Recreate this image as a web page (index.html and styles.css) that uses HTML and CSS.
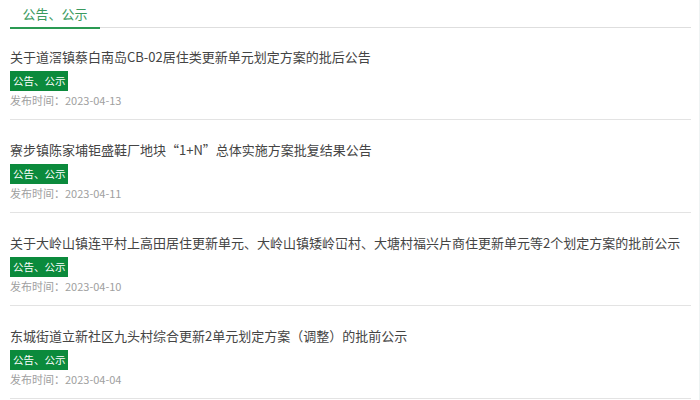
FILE: index.html
```html
<!DOCTYPE html>
<html lang="zh-CN">
<head>
<meta charset="utf-8">
<title>公告、公示</title>
<link rel="stylesheet" href="styles.css">
</head>
<body>
<div class="page">
  <div class="tabs">
    <div class="tab active">公告、公示</div>
  </div>
  <ul class="list">
    <li class="item">
      <div class="title">关于道滘镇蔡白南岛CB-02居住类更新单元划定方案的批后公告</div>
      <span class="tag">公告、公示</span>
      <div class="date">发布时间：2023-04-13</div>
    </li>
    <li class="item">
      <div class="title">寮步镇陈家埔钜盛鞋厂地块“1+N”总体实施方案批复结果公告</div>
      <span class="tag">公告、公示</span>
      <div class="date">发布时间：2023-04-11</div>
    </li>
    <li class="item">
      <div class="title">关于大岭山镇连平村上高田居住更新单元、大岭山镇矮岭冚村、大塘村福兴片商住更新单元等2个划定方案的批前公示</div>
      <span class="tag">公告、公示</span>
      <div class="date">发布时间：2023-04-10</div>
    </li>
    <li class="item">
      <div class="title">东城街道立新社区九头村综合更新2单元划定方案（调整）的批前公示</div>
      <span class="tag">公告、公示</span>
      <div class="date">发布时间：2023-04-04</div>
    </li>
  </ul>
</div>
</body>
</html>
```

FILE: styles.css
```css
* { box-sizing: border-box; }
html, body {
  margin: 0;
  padding: 0;
  background: #fff;
}
body {
  font-family: "Noto Sans CJK SC", "Noto Sans", sans-serif;
  overflow: hidden;
}
.page {
  width: 700px;
  height: 400px;
  padding: 0 8px 0 10px;
  border-right: 1px solid #eef3f3;
}
.tabs {
  display: flex;
  border-bottom: 1px solid #dedede;
  height: 28px;
}
.tab {
  height: 29px;
  margin-bottom: -2px;
  padding: 0 12px 0 12px;
  width: 90px;
  font-size: 13px;
  line-height: 27px;
  color: #3a9a5e;
  border-bottom: 2px solid #2a9a52;
  text-align: center;
}
.list {
  list-style: none;
  margin: 0;
  padding: 0;
}
.item {
  padding: 20px 0 10px;
  border-bottom: 1px solid #e3e3e3;
}
.item:first-child {
  padding-top: 19px;
}
.title {
  font-size: 13px;
  line-height: 20px;
  color: #444;
  white-space: nowrap;
}
.tag {
  display: inline-block;
  margin-top: 4px;
  height: 20px;
  padding: 0 2px 0 3px;
  font-size: 10.5px;
  line-height: 20px;
  color: #fff;
  background: #0b8a3c;
  vertical-align: top;
}
.date {
  font-size: 11px;
  line-height: 18px;
  color: #a0a0a0;
}
```
